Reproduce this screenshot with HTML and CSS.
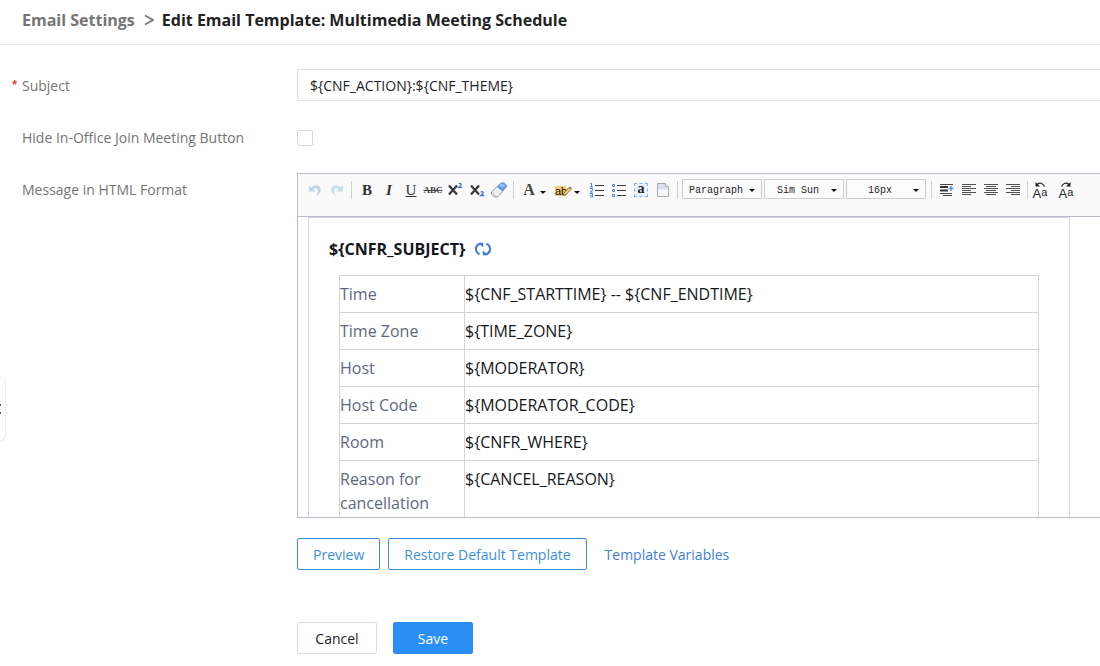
FILE: index.html
```html
<!DOCTYPE html>
<html lang="en">
<head>
  <meta charset="UTF-8">
  <title>Edit Email Template</title>
  <meta name="viewport" content="width=device-width, initial-scale=1.0">
  <link rel="stylesheet" href="styles.css">
</head>
<body>
  <header class="page-header">
    <a href="#" class="crumb">Email Settings</a>
    <svg class="crumb-arrow" width="10" height="12" viewBox="0 0 10 12"><path d="M1 1.500L9 6L1 10.500" fill="none" stroke="#777" stroke-width="1.900"/></svg>
    <h1>Edit Email Template: Multimedia Meeting Schedule</h1>
  </header>

  <button class="side-toggle" type="button" aria-label="Toggle sidebar">
    <svg width="3" height="10" viewBox="0 0 3 10"><path d="M0 1h1M0 9h1" stroke="#222" stroke-width="1.500"/></svg>
  </button>

  <form class="template-form">
    <div class="form-row">
      <label class="form-label required" for="subject">Subject</label>
      <input class="text-input" type="text" id="subject" value="${CNF_ACTION}:${CNF_THEME}">
    </div>

    <div class="form-row">
      <label class="form-label" for="hideJoin">Hide In-Office Join Meeting Button</label>
      <div class="check-cell"><input class="checkbox" type="checkbox" id="hideJoin"></div>
    </div>

    <div class="form-row">
      <span class="form-label">Message in HTML Format</span>
      <div class="form-field">
        <div class="editor">
          <div class="toolbar">
            <button type="button" class="tool" aria-label="Undo">
              <svg width="16" height="16" viewBox="0 0 16 16"><path d="M2 3v6.500h6.500L6.200 7.200C8 5.200 11 5.700 11 8.800c0 2-1 3.700-2.500 5.200 3.500-1.500 5.200-3.700 5.200-6.400C13.700 3 8 1.500 4.500 5.400z" fill="#bcd6ee"/></svg>
            </button>
            <button type="button" class="tool" aria-label="Redo">
              <svg width="16" height="16" viewBox="0 0 16 16"><path d="M14 3v6.500H7.500l2.300-2.300C8 5.200 5 5.700 5 8.800c0 2 1 3.700 2.500 5.200-3.500-1.500-5.200-3.700-5.200-6.400C2.300 3 8 1.500 11.500 5.400z" fill="#c4e0f0"/></svg>
            </button>
            <span class="sep"></span>
            <button type="button" class="tool tool-text"><b>B</b></button>
            <button type="button" class="tool tool-text"><i>I</i></button>
            <button type="button" class="tool tool-text"><u>U</u></button>
            <button type="button" class="tool tool-strike"><s>ABC</s></button>
            <button type="button" class="tool" aria-label="Superscript">
              <svg width="16" height="16" viewBox="0 0 16 16"><path d="M2 3.500l8 9M10 3.500l-8 9" stroke="#3a3a3a" stroke-width="2.300"/><path d="M11.700 2q1.500-1.200 2.500 0 .5 1-2.500 3.300h3.500" fill="none" stroke="#3c78d0" stroke-width="1.300"/></svg>
            </button>
            <button type="button" class="tool" aria-label="Subscript">
              <svg width="16" height="16" viewBox="0 0 16 16"><path d="M2 3.500l8 9M10 3.500l-8 9" stroke="#3a3a3a" stroke-width="2.300"/><path d="M11.700 10.200q1.500-1.200 2.500 0 .5 1-2.500 3.300h3.500" fill="none" stroke="#3c78d0" stroke-width="1.300"/></svg>
            </button>
            <button type="button" class="tool" aria-label="Clear formatting">
              <svg width="16" height="16" viewBox="0 0 16 16"><path d="M10 .8h3L15.500 3v2L6.500 15H3.500L.5 12.500V10z" fill="#eeeff2" stroke="#8c909a" stroke-width=".9"/><path d="M10 1h3l2.200 2.300v1.600L11.200 9.300 6 5z" fill="#5c9cea"/><path d="M10 1.800h2.500L14 3.200 11.500 6 8 4z" fill="#8fbffa"/><path d="M1 10.500l4 3.500" fill="none" stroke="#a9adb5" stroke-width=".8"/></svg>
            </button>
            <span class="sep"></span>
            <button type="button" class="tool tool-text tool-split"><span class="font-color">A</span><span class="caret"></span></button>
            <button type="button" class="tool tool-split" aria-label="Highlight color">
              <span class="highlight">ab<svg width="9" height="10" viewBox="0 0 9 10"><path d="M.5 9.500L1 7 6 1.500 8 3.500 3 8.500z" fill="#f3d46b" stroke="#76521c" stroke-width=".8"/><path d="M6 1.500L7 .6 8.700 2.300 8 3.500z" fill="#d94d42"/></svg></span>
              <span class="caret"></span>
            </button>
            <button type="button" class="tool" aria-label="Ordered list">
              <svg width="16" height="16" viewBox="0 0 16 16"><path d="M6 3.500h9M6 8.500h9M6 13.500h9" stroke="#3d3d3d"/><path d="M1 1.500h1.500V5M1 5h3M1 6.500h2.500v1.700L1 10h3M1 11.500h2.500v3.500H1M1.500 13.200h2" fill="none" stroke="#4d85d6"/></svg>
            </button>
            <button type="button" class="tool" aria-label="Bullet list">
              <svg width="16" height="16" viewBox="0 0 16 16"><path d="M6 3.500h9M6 8.500h9M6 13.500h9" stroke="#3d3d3d"/><path d="M1.500 2.500h2v2h-2zM1.500 7.500h2v2h-2zM1.500 12.500h2v2h-2z" fill="#cfe0fa" stroke="#5688dc"/></svg>
            </button>
            <button type="button" class="tool"><span class="select-all">a</span></button>
            <button type="button" class="tool" aria-label="Clear document">
              <svg width="16" height="16" viewBox="0 0 16 16"><path d="M2.500 1.500h8l3 3v10h-11z" fill="#f6f7f9" stroke="#a7a9ad"/><path d="M3 2h7.500v3H13v2.500H3z" fill="#d9e0ea"/><path d="M10.500 1.500v3h3" fill="#fff" stroke="#a7a9ad"/></svg>
            </button>
            <span class="sep"></span>
            <div class="picker">
              <select aria-label="Paragraph format"><option>Paragraph</option></select>
            </div>
            <div class="picker">
              <select aria-label="Font family"><option>Sim Sun</option></select>
            </div>
            <div class="picker">
              <select aria-label="Font size"><option>16px</option></select>
            </div>
            <span class="sep"></span>
            <button type="button" class="tool" aria-label="Indent">
              <svg width="16" height="16" viewBox="0 0 16 16"><path d="M1 2.500h13M1 11.500h12M4 13.500h9" stroke="#444"/><path d="M1 5h8M1 8.500h8" stroke="#333" stroke-width="2"/><path d="M9.500 6.500h5M12 4v5" stroke="#5d94e0" stroke-width="1.600"/></svg>
            </button>
            <button type="button" class="tool" aria-label="Align left">
              <svg width="16" height="16" viewBox="0 0 16 16"><path d="M1 2.500h14M1 4.500h9M1 6.500h14M1 8.500h9M1 10.500h14M1 12.500h9" stroke="#505050"/></svg>
            </button>
            <button type="button" class="tool" aria-label="Align center">
              <svg width="16" height="16" viewBox="0 0 16 16"><path d="M1 2.500h14M3 4.500h10M1 6.500h14M3 8.500h10M1 10.500h14M3 12.500h10" stroke="#505050"/></svg>
            </button>
            <button type="button" class="tool" aria-label="Align right">
              <svg width="16" height="16" viewBox="0 0 16 16"><path d="M1 2.500h14M6 4.500h9M1 6.500h14M6 8.500h9M1 10.500h14M6 12.500h9" stroke="#505050"/></svg>
            </button>
            <span class="sep sep-tight"></span>
            <button type="button" class="tool tool-case">
              <svg width="12" height="5" viewBox="0 0 12 5"><path d="M3 2.500q4.500-3.500 7.500 2" fill="none" stroke="#222" stroke-width="1.200"/><path d="M1.500 0v4.500h4.500z" fill="#222"/></svg>
              <span>A<b>a</b></span>
            </button>
            <button type="button" class="tool tool-case">
              <svg width="12" height="5" viewBox="0 0 12 5"><path d="M9 2.500q-4.500-3.500-7.500 2" fill="none" stroke="#222" stroke-width="1.200"/><path d="M10.500 0v4.500H6z" fill="#222"/></svg>
              <span>A<b>a</b></span>
            </button>
          </div>

          <div class="editor-body">
            <div class="mail">
              <h2>${CNFR_SUBJECT}
                <svg width="18" height="14" viewBox="0 0 18 14"><g fill="none" stroke="#3f77ea" stroke-width="2"><path d="M5.500 12.300C1 10 .8 4.500 4.500 2.300L7.500 1.700"/><path d="M12.500 1.700c4.500 2.300 4.700 7.800 1 10l-3 .6"/></g><path d="M4.500 .8h4.700v4.700L7.500 4z M13.500 13.200H8.800V8.500l1.700 1.500z" fill="#3f77ea"/></svg>
              </h2>
              <table class="mail-table">
                <tr><th>Time</th><td>${CNF_STARTTIME} -- ${CNF_ENDTIME}</td></tr>
                <tr><th>Time Zone</th><td>${TIME_ZONE}</td></tr>
                <tr><th>Host</th><td>${MODERATOR}</td></tr>
                <tr><th>Host Code</th><td>${MODERATOR_CODE}</td></tr>
                <tr><th>Room</th><td>${CNFR_WHERE}</td></tr>
                <tr><th>Reason for cancellation</th><td>${CANCEL_REASON}</td></tr>
              </table>
            </div>
          </div>
        </div>

        <div class="template-actions">
          <button type="button" class="btn btn-outline">Preview</button>
          <button type="button" class="btn btn-outline">Restore Default Template</button>
          <a href="#" class="variables-link">Template Variables</a>
        </div>

        <div class="form-actions">
          <button type="button" class="btn btn-wide">Cancel</button>
          <button type="submit" class="btn btn-wide btn-primary">Save</button>
        </div>
      </div>
    </div>
  </form>
</body>
</html>
```
FILE: styles.css
```css
* {
  margin: 0;
  padding: 0;
  box-sizing: border-box;
}

:root {
  --text: #1f2329;
  --label: #757575;
  --blue: #3d8fdc;
  --primary: #2a8ef7;
  --border: #dcdee2;
  --editor-border: #b9bdc9;
  --mail-border: #d3d4d7;
}

body {
  font-family: "Open Sans", "Noto Sans", sans-serif;
  font-size: 14px;
  color: var(--text);
  background: #fff;
}

button,
input,
select {
  font: inherit;
  color: inherit;
}

button {
  cursor: pointer;
}

/* Header */
.page-header {
  display: flex;
  align-items: center;
  height: 45px;
  padding: 0 22px 4px;
  border-bottom: 1px solid #e8e8e8;
  font-size: 16px;
  font-weight: 700;
}

.crumb {
  color: var(--label);
  text-decoration: none;
}

.crumb-arrow {
  margin: 0 8px 0 9px;
}

h1 {
  font-size: 16px;
  font-weight: 700;
  color: #222;
}

/* Sidebar handle on the window edge */
.side-toggle {
  position: absolute;
  top: 377px;
  left: 0;
  display: flex;
  align-items: center;
  width: 6px;
  height: 64px;
  background: #fff;
  border: 1px solid #ececec;
  border-left: 0;
  border-radius: 0 6px 6px 0;
}

/* Form */
.template-form {
  display: flex;
  flex-direction: column;
  gap: 20px;
  padding: 24px 0 12px 22px;
}

.form-row {
  display: grid;
  grid-template-columns: 275px minmax(0, 1fr);
}

.form-label {
  position: relative;
  line-height: 34px;
  height: 32px;
  color: var(--label);
}

.required::before {
  content: '*';
  position: absolute;
  left: -11px;
  font-family: "Liberation Mono", monospace;
  font-weight: 700;
  font-size: 12px;
  color: #d8452b;
}

.text-input {
  width: 100%;
  height: 32px;
  padding: 0 12px;
  border: 1px solid var(--border);
  border-right: 0;
  border-radius: 2px 0 0 2px;
  outline: none;
}

.check-cell {
  display: flex;
  align-items: center;
  padding-top: 2px;
}

.checkbox {
  appearance: none;
  width: 16px;
  height: 16px;
  border: 1px solid #d9d9d9;
  border-radius: 2px;
}

.checkbox:checked {
  background: var(--primary);
}

/* Editor */
.editor {
  height: 345px;
  overflow: hidden;
  display: flex;
  flex-direction: column;
  border: 1px solid var(--editor-border);
  border-right: 0;
}

.toolbar {
  display: flex;
  align-items: flex-start;
  flex-shrink: 0;
  height: 43px;
  padding: 5px 6px;
  background: #fafafa;
  border-bottom: 1px solid var(--editor-border);
}

.tool {
  display: flex;
  flex-shrink: 0;
  align-items: center;
  justify-content: center;
  width: 22px;
  height: 22px;
  background: none;
  border: 0;
}

.tool:hover {
  background: #e9edf5;
}

.tool-text {
  font-family: "Liberation Serif", serif;
  font-size: 15px;
  color: #333;
}

.tool-text i {
  font-weight: bold;
}

.tool-strike {
  font-family: "Liberation Serif", serif;
  font-size: 9px;
  font-weight: bold;
  color: #444;
}

.tool-split {
  width: 34px;
  justify-content: flex-start;
  padding-left: 3px;
  gap: 3px;
}

.font-color {
  width: 16px;
  font-size: 16px;
  font-weight: bold;
  color: #444;
}

.caret,
.picker::after {
  border: 3px solid transparent;
  border-top-color: #111;
  border-bottom: 0;
}

.caret {
  margin-top: 4px;
}

.highlight {
  display: flex;
  align-items: center;
  width: 16px;
  height: 10px;
  margin-top: 2px;
  font-family: "Liberation Sans", sans-serif;
  font-size: 11px;
  color: #111;
  background: linear-gradient(90deg, #f8c777 11px, transparent 11px);
}

.highlight svg {
  flex-shrink: 0;
  margin-left: -4px;
}

.select-all {
  width: 14px;
  height: 14px;
  font-family: "Liberation Serif", serif;
  font-size: 14px;
  font-weight: bold;
  line-height: 10px;
  background: #e9f1fd;
  border: 1px dashed #8fb4ea;
}

.sep {
  flex-shrink: 0;
  width: 1px;
  height: 18px;
  margin: 2px 4px 0 3px;
  background: #cfcfcf;
}

.sep-tight {
  margin-right: 1px;
}

.picker {
  position: relative;
  flex-shrink: 0;
  width: 80px;
  margin-right: 2px;
}

.picker::after {
  content: '';
  position: absolute;
  top: 10px;
  right: 7px;
  pointer-events: none;
}

.picker select {
  appearance: none;
  display: block;
  width: 100%;
  height: 20px;
  padding: 2px 12px 0 0;
  font-family: "Liberation Mono", monospace;
  font-size: 10px;
  text-align: center;
  text-align-last: center;
  background: #fcfcfc;
  border: 1px solid #ccc;
  border-radius: 0;
}

.tool-case {
  flex-direction: column;
  margin-right: 4px;
  font-family: "Liberation Sans", sans-serif;
  font-size: 13px;
  line-height: 10px;
}

.tool-case b {
  font-size: 11px;
  font-weight: 400;
  vertical-align: 2px;
}

.editor-body {
  flex: 1;
  min-height: 0;
  overflow: hidden;
  padding: 0 10px;
}

.mail {
  max-width: 762px;
  padding: 15px 20px 20px;
  font-size: 16px;
  line-height: 24px;
  color: #15171c;
  border: 1px solid var(--mail-border);
}

.mail h2 {
  display: flex;
  align-items: center;
  gap: 9px;
  height: 32px;
  font-size: 16px;
  font-weight: 700;
}

.mail-table {
  width: calc(100% - 20px);
  margin: 10px 10px 0;
  border-collapse: collapse;
  table-layout: fixed;
}

.mail-table th,
.mail-table td {
  padding: 6px 0;
  text-align: left;
  vertical-align: top;
  border: 1px solid var(--mail-border);
}

.mail-table th {
  width: 125px;
  font-weight: 400;
  color: #5f6880;
}

/* Buttons */
.template-actions {
  display: flex;
  align-items: center;
  gap: 8px;
  margin-top: 20px;
}

.btn {
  height: 32px;
  padding: 0 15px;
  background: #fff;
  border: 1px solid var(--border);
  border-radius: 2px;
}

.btn-outline {
  color: var(--blue);
  border-color: var(--blue);
}

.btn-wide {
  width: 80px;
}

.btn-primary {
  color: #fff;
  background: var(--primary);
  border-color: var(--primary);
}

.variables-link {
  margin-left: 10px;
  color: #4280d8;
  text-decoration: none;
}

.form-actions {
  display: flex;
  gap: 16px;
  margin-top: 52px;
}
```
